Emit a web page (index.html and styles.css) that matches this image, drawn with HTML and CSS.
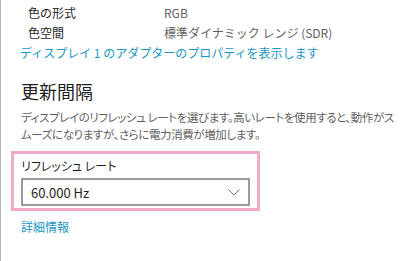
FILE: index.html
```html
<!DOCTYPE html>
<html lang="ja">
<head>
    <meta charset="UTF-8">
    <title>ディスプレイの詳細設定</title>
    <link rel="stylesheet" href="styles.css">
</head>
<body>
    <div class="page">
        <div class="props">
            <div class="prop-name">色の形式</div>
            <div class="prop-value">RGB</div>
            <div class="prop-name">色空間</div>
            <div class="prop-value">標準ダイナミック レンジ (SDR)</div>
        </div>
        <a href="#" class="link adapter-link">ディスプレイ 1 のアダプターのプロパティを表示します</a>

        <h2 class="section-title">更新間隔</h2>
        <p class="description">ディスプレイのリフレッシュ レートを選びます。高いレートを使用すると、動作がスムーズになりますが、さらに電力消費が増加します。</p>

        <div class="highlight">
            <div class="field-label">リフレッシュ レート</div>
            <div class="select">
                <span>60.000 Hz</span>
                <svg class="chevron" width="12" height="7" viewBox="0 0 12 7">
                    <path d="M0.5 0.5 L6 6 L11.5 0.5" fill="none" stroke="#777" stroke-width="1"/>
                </svg>
            </div>
        </div>

        <a href="#" class="link more-link">詳細情報</a>
    </div>
</body>
</html>
```

FILE: styles.css
```css
:root {
    --text-color: #1f1f1f;
    --light-text: #5f5f5f;
    --link-color: #1a96c6;
    --highlight-color: #f0a9c9;
}

* {
    margin: 0;
    padding: 0;
    box-sizing: border-box;
}

body {
    background-color: #ffffff;
    color: var(--text-color);
    font-family: "Noto Sans CJK JP", "Noto Sans", sans-serif;
    font-size: 12px;
}

.page {
    width: 400px;
    height: 261px;
    border-left: 1px solid #b4b4b4;
    padding: 3px 0 0 19px;
    overflow: hidden;
}

.props {
    display: grid;
    grid-template-columns: 136px auto;
    margin-left: 8px;
    line-height: 20px;
}

.prop-value {
    color: var(--light-text);
}

.link {
    display: block;
    color: var(--link-color);
    text-decoration: none;
}

.adapter-link {
    line-height: 20px;
}

.section-title {
    margin-top: 17px;
    font-size: 18px;
    font-weight: 400;
    line-height: 22px;
    padding-left: 1px;
}

.description {
    width: 380px;
    margin-top: 7px;
    font-size: 11.5px;
    line-height: 17px;
    color: var(--light-text);
    padding-left: 1px;
    letter-spacing: -0.4px;
    font-feature-settings: "palt";
}

.highlight {
    width: 249px;
    margin: 8px 0 0 -9px;
    border: 3px solid var(--highlight-color);
    padding: 3px 7px 2px 7px;
}

.field-label {
    line-height: 18px;
    margin-bottom: 3px;
    font-feature-settings: "palt";
}

.select {
    display: flex;
    justify-content: space-between;
    align-items: center;
    height: 28px;
    border: 2px solid #9a9a9a;
    padding: 0 8px 0 8px;
    font-size: 13px;
}

.more-link {
    margin-top: 7px;
    line-height: 18px;
    padding-left: 1px;
}
```
